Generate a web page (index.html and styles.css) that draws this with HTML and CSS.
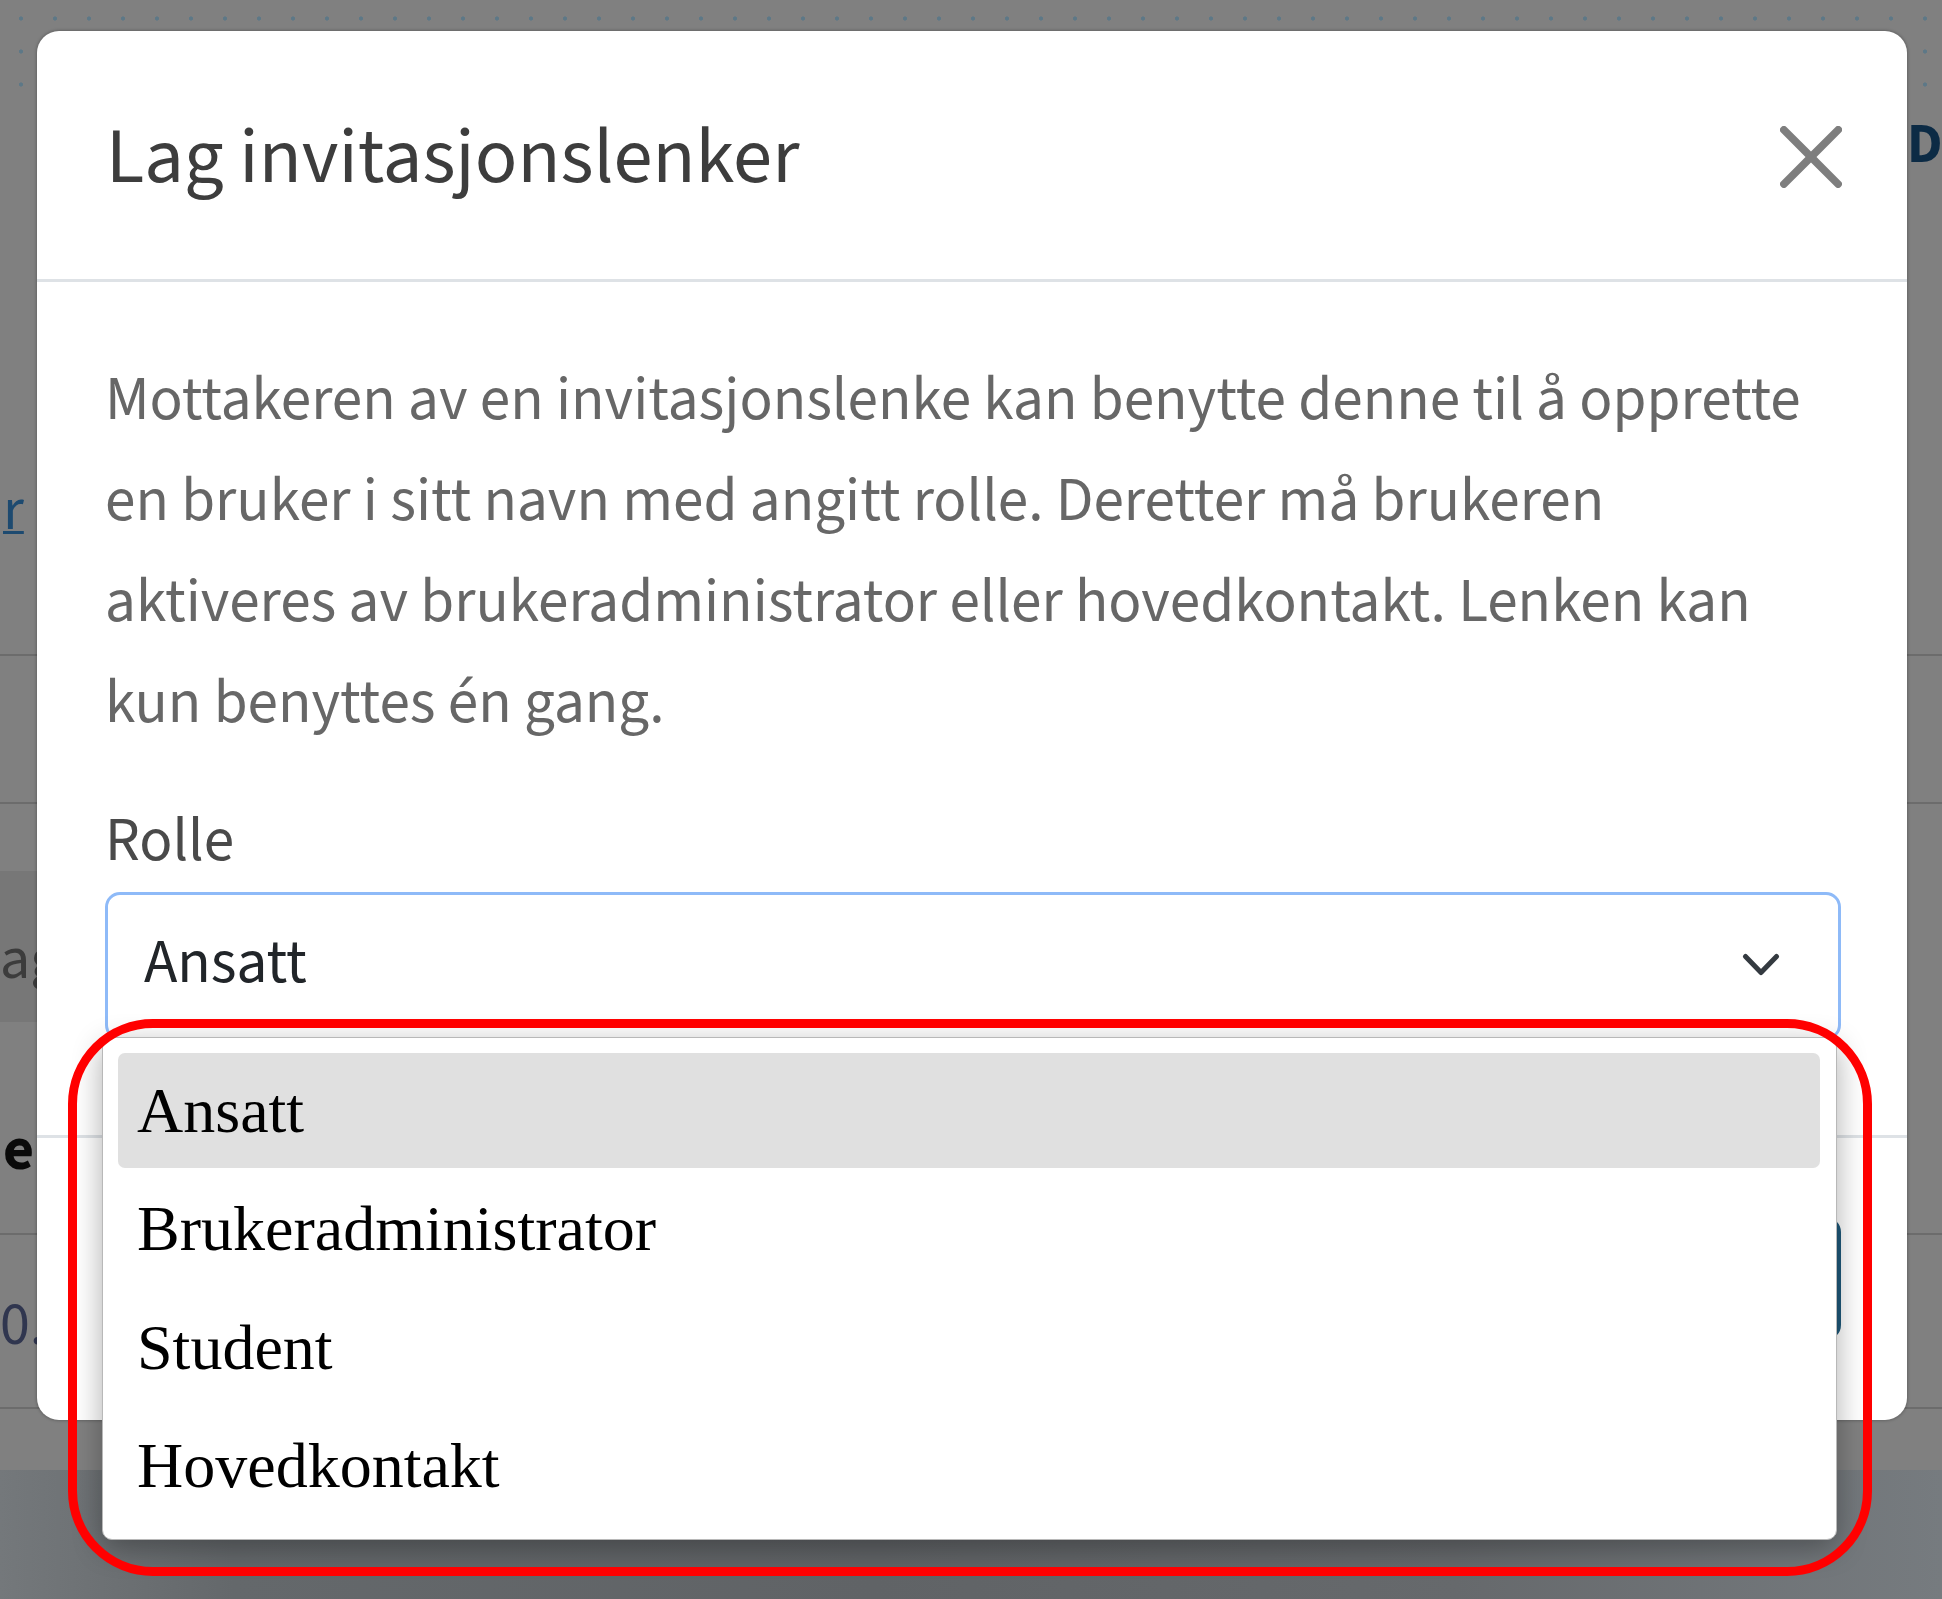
FILE: index.html
```html
<!DOCTYPE html>
<html lang="no">
<head>
<meta charset="utf-8">
<title>Lag invitasjonslenker</title>
<link rel="stylesheet" href="styles.css">
</head>
<body>
  <div class="page">
    <div class="row row-top"></div>
    <div class="row row-d">
      <div class="cell-left"></div>
      <div class="cell-right"><span class="heading-glimpse">D</span></div>
    </div>
    <div class="row row-r lined">
      <div class="cell-left"><a class="link-glimpse">r</a></div>
    </div>
    <div class="row row-2 lined"></div>
    <div class="row row-3"></div>
    <div class="row row-band">
      <div class="cell-left band"><span class="text-glimpse">ag</span></div>
    </div>
    <div class="row row-e lined">
      <div class="cell-left"><span class="bold-glimpse">e</span></div>
    </div>
    <div class="row row-0 lined">
      <div class="cell-left"><span class="num-glimpse">0.</span></div>
    </div>
    <div class="row row-9"></div>
    <div class="row row-foot"></div>
  </div>

  <div class="modal">
    <div class="modal-header">
      <h5 class="modal-title">Lag invitasjonslenker</h5>
      <button class="btn-close" aria-label="Lukk">
        <svg viewBox="0 0 16 16" width="62" height="62"><path d="M.293.293a1 1 0 0 1 1.414 0L8 6.586 14.293.293a1 1 0 1 1 1.414 1.414L9.414 8l6.293 6.293a1 1 0 0 1-1.414 1.414L8 9.414l-6.293 6.293a1 1 0 0 1-1.414-1.414L6.586 8 .293 1.707a1 1 0 0 1 0-1.414z"/></svg>
      </button>
    </div>
    <div class="modal-body">
      <p class="intro">Mottakeren av en invitasjonslenke kan benytte denne til å opprette en bruker i sitt navn med angitt rolle. Deretter må brukeren aktiveres av brukeradministrator eller hovedkontakt. Lenken kan kun benyttes én gang.</p>
      <label class="form-label">Rolle</label>
      <div class="form-select">
        <span>Ansatt</span>
        <svg class="chevron" viewBox="0 0 38 24" width="38" height="24"><polyline points="3.5,3.5 19,19.5 34.5,3.5"/></svg>
      </div>
    </div>
    <div class="modal-footer">
      <button class="btn-primary" aria-label="Lag lenke"></button>
    </div>
  </div>

  <div class="listbox">
    <div class="option selected">Ansatt</div>
    <div class="option">Brukeradministrator</div>
    <div class="option">Student</div>
    <div class="option">Hovedkontakt</div>
  </div>

  <div class="annotation"></div>
</body>
</html>
```
FILE: styles.css
```css
html, body {
  margin: 0;
  padding: 0;
}

body {
  width: 1942px;
  height: 1599px;
  overflow: hidden;
  position: relative;
  background: #808080;
  font-family: "Source Sans 3", Lato, sans-serif;
}

/* ---------- dimmed page underneath ---------- */
.page {
  display: flex;
  flex-direction: column;
  height: 1599px;
}

.row {
  display: flex;
  justify-content: space-between;
  box-sizing: border-box;
  flex: none;
}

.lined {
  border-bottom: 2px solid #6c6c6c;
}

.row-top {
  height: 100px;
  background-image: radial-gradient(circle, rgba(70, 115, 140, 0.6) 1.7px, transparent 2.5px);
  background-size: 34px 33px;
  background-position: 4px 2px;
}

.row-d {
  height: 90px;
}

.row-r {
  height: 466px;
  padding-top: 281px;
}

.row-2 {
  height: 148px;
}

.row-3 {
  height: 67px;
}

.row-band {
  height: 151px;
}

.row-e {
  height: 213px;
  padding-top: 89px;
}

.row-0 {
  height: 174px;
  padding-top: 51px;
}

.row-9 {
  height: 61px;
}

.row-foot {
  height: 129px;
  background: linear-gradient(90deg, #74787b 0%, #64686b 12%, #606366 45%, #66696c 75%, #767b7f 100%);
}

.cell-left {
  width: 37px;
  display: flex;
  font-size: 60px;
  line-height: 80px;
  white-space: nowrap;
}

.cell-left.band {
  background: #777777;
  padding-top: 26px;
  line-height: 125px;
  height: 151px;
  box-sizing: border-box;
}

.cell-right {
  width: 35px;
  white-space: nowrap;
}

.heading-glimpse {
  font-size: 56px;
  line-height: 90px;
  font-weight: 700;
  color: #0c2b45;
}

.link-glimpse {
  padding-left: 3px;
  color: #1d4a70;
  text-decoration: underline;
  text-decoration-thickness: 3px;
}

.text-glimpse {
  color: #3c3c3c;
}

.bold-glimpse {
  padding-left: 3px;
  font-weight: 700;
  color: #0a0a0a;
}

.num-glimpse {
  color: #30364f;
}

/* ---------- modal ---------- */
.modal {
  position: absolute;
  left: 37px;
  top: 31px;
  width: 1870px;
  height: 1389px;
  background: #fff;
  border-radius: 22px;
  box-shadow: 0 0 3px 1px rgba(0, 0, 0, 0.22);
  display: flex;
  flex-direction: column;
  overflow: hidden;
}

.modal-header {
  display: flex;
  align-items: center;
  justify-content: space-between;
  padding: 79px 65px 74.6px 69px;
  border-bottom: 3px solid #dee2e6;
}

.modal-title {
  margin: 0;
  font-size: 78.7px;
  font-weight: 400;
  line-height: 94.4px;
  color: #3d3d3d;
}

.btn-close {
  width: 62px;
  height: 62px;
  padding: 0;
  border: 0;
  background: none;
  opacity: 0.5;
  display: flex;
}

.btn-close svg {
  fill: #000;
}

.modal-body {
  padding: 68px 66px 95px 68px;
}

.intro {
  margin: 0 0 41px;
  font-size: 61.3px;
  line-height: 101px;
  color: #676767;
}

.form-label {
  display: block;
  margin-bottom: 5px;
  font-size: 61.3px;
  line-height: 92px;
  color: #4a4a4a;
}

.form-select {
  height: 148px;
  box-sizing: border-box;
  border: 3px solid #8ebaf8;
  border-radius: 15px;
  display: flex;
  align-items: center;
  justify-content: space-between;
  padding: 0 58px 6px 36px;
  font-size: 61.3px;
  color: #212529;
}

.chevron {
  margin-top: 4px;
}

.chevron polyline {
  fill: none;
  stroke: #343a40;
  stroke-width: 5;
  stroke-linecap: round;
  stroke-linejoin: round;
}

.modal-footer {
  flex: 1;
  border-top: 3px solid #dee2e6;
  display: flex;
  justify-content: flex-end;
  align-items: flex-start;
  padding: 79px 66px 0;
}

.btn-primary {
  width: 420px;
  height: 123px;
  padding: 0;
  border: 0;
  border-radius: 15px;
  background: #1f5a7b;
}

/* ---------- native dropdown list ---------- */
.listbox {
  position: absolute;
  left: 102px;
  top: 1037px;
  width: 1735px;
  height: 503px;
  box-sizing: border-box;
  padding: 15px 16px 17px 15px;
  background: #fff;
  border: 1px solid #b8b8b8;
  border-radius: 10px;
  box-shadow: 0 8px 30px rgba(0, 0, 0, 0.32);
  display: flex;
  flex-direction: column;
  gap: 3.3px;
  font-family: "Liberation Serif", "Times New Roman", serif;
  font-size: 64px;
  color: #000;
}

.option {
  height: 115px;
  line-height: 115px;
  padding-left: 19px;
  border-radius: 7px;
  flex: none;
}

.option.selected {
  background: #e0e0e0;
}

/* ---------- red annotation ---------- */
.annotation {
  position: absolute;
  left: 68px;
  top: 1019px;
  width: 1804px;
  height: 557px;
  box-sizing: border-box;
  border: 9px solid #ff0000;
  border-radius: 85px;
  pointer-events: none;
}
```
